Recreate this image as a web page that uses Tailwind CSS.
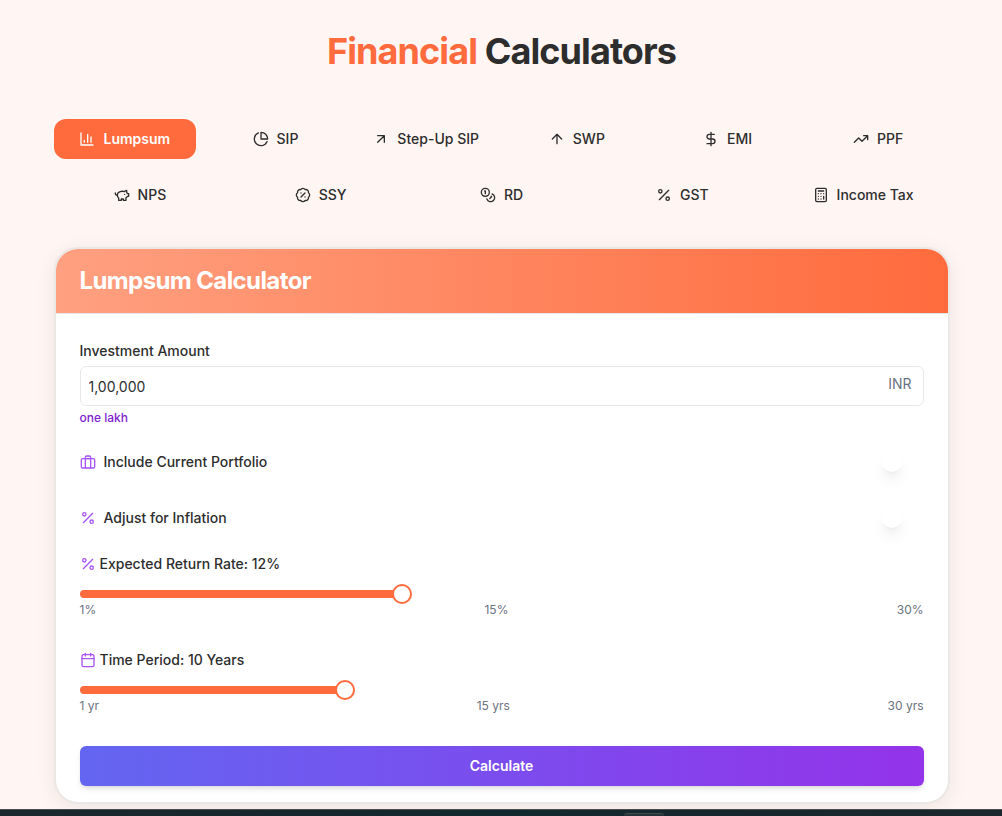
<!DOCTYPE html>
<html lang="en">
<head>
<meta charset="UTF-8" />
<meta name="viewport" content="width=device-width, initial-scale=1" />
<title>Financial Calculators</title>
<script src="https://cdn.jsdelivr.net/npm/@tailwindcss/browser@4"></script>
</head>
<body class="flex min-h-screen flex-col bg-[#fff5f2] font-['Inter',sans-serif] text-sm text-[#2d2d2d]">

<!-- Icon set -->
<svg class="hidden" aria-hidden="true">
  <symbol id="bar-chart" viewBox="0 0 24 24"><path d="M3 3v18h18M18 17V9M13 17V5M8 17v-3" /></symbol>
  <symbol id="pie-chart" viewBox="0 0 24 24"><path d="M21.21 15.89A10 10 0 1 1 8 2.83" /><path d="M22 12A10 10 0 0 0 12 2v10z" /></symbol>
  <symbol id="arrow-up-right" viewBox="0 0 24 24"><path d="M7 7h10v10M7 17 17 7" /></symbol>
  <symbol id="arrow-up" viewBox="0 0 24 24"><path d="m5 12 7-7 7 7M12 19V5" /></symbol>
  <symbol id="dollar" viewBox="0 0 24 24"><path d="M12 2v20M17 5H9.5a3.5 3.5 0 0 0 0 7h5a3.5 3.5 0 0 1 0 7H6" /></symbol>
  <symbol id="trending-up" viewBox="0 0 24 24"><path d="m22 7-8.5 8.5-5-5L2 17M16 7h6v6" /></symbol>
  <symbol id="piggy-bank" viewBox="0 0 24 24"><path d="M19 5c-1.5 0-2.8 1.4-3 2-3.5-1.5-11-.3-11 5 0 1.8 0 3 2 4.5V20h4v-2h3v2h4v-4c1-.5 1.7-1 2-2h2v-4h-2c0-1-.5-1.5-1-2V5z" /><path d="M2 9v1c0 1.1.9 2 2 2h1M16 11h.01" /></symbol>
  <symbol id="badge-percent" viewBox="0 0 24 24"><path d="M3.85 8.62a4 4 0 0 1 4.78-4.77 4 4 0 0 1 6.74 0 4 4 0 0 1 4.78 4.78 4 4 0 0 1 0 6.74 4 4 0 0 1-4.77 4.78 4 4 0 0 1-6.75 0 4 4 0 0 1-4.78-4.77 4 4 0 0 1 0-6.76Z" /><path d="m15 9-6 6M9 9h.01M15 15h.01" /></symbol>
  <symbol id="coins" viewBox="0 0 24 24"><circle cx="8" cy="8" r="6" /><path d="M18.09 10.37A6 6 0 1 1 10.34 18M7 6h1v4M16.71 13.88l.7.71-2.82 2.82" /></symbol>
  <symbol id="percent" viewBox="0 0 24 24"><path d="M19 5 5 19" /><circle cx="6.5" cy="6.5" r="2.5" /><circle cx="17.5" cy="17.5" r="2.5" /></symbol>
  <symbol id="calculator" viewBox="0 0 24 24"><rect x="4" y="2" width="16" height="20" rx="2" /><path d="M8 6h8M16 14v4M16 10h.01M12 10h.01M8 10h.01M12 14h.01M8 14h.01M12 18h.01M8 18h.01" /></symbol>
  <symbol id="briefcase" viewBox="0 0 24 24"><rect x="2" y="7" width="20" height="14" rx="2" /><path d="M16 21V5a2 2 0 0 0-2-2h-4a2 2 0 0 0-2 2v16M8 7h8" /></symbol>
  <symbol id="calendar" viewBox="0 0 24 24"><rect x="3" y="4" width="18" height="18" rx="2" /><path d="M16 2v4M8 2v4M3 10h18" /></symbol>
</svg>

<main class="mx-auto w-full max-w-[897px] pt-[31px] pl-px">
  <h1 class="text-center text-4xl font-bold tracking-tight"><span class="text-[#ff6b3d]">Financial</span> Calculators</h1>

  <!-- Calculator tabs -->
  <nav class="mt-12 flex flex-wrap gap-x-2 gap-y-4 font-medium [&_svg]:size-4 [&_svg]:fill-none [&_svg]:stroke-current [&_svg]:stroke-2 [&_svg]:[stroke-linecap:round] [&_svg]:[stroke-linejoin:round]">
    <button type="button" class="flex h-10 min-w-[130px] flex-1 items-center justify-center gap-2 rounded-xl bg-[#ff6b3d] font-semibold text-white"><svg><use href="#bar-chart" /></svg>Lumpsum</button>
    <button type="button" class="flex h-10 min-w-[130px] flex-1 items-center justify-center gap-2 rounded-xl"><svg><use href="#pie-chart" /></svg>SIP</button>
    <button type="button" class="flex h-10 min-w-[130px] flex-1 items-center justify-center gap-2 rounded-xl"><svg><use href="#arrow-up-right" /></svg>Step-Up SIP</button>
    <button type="button" class="flex h-10 min-w-[130px] flex-1 items-center justify-center gap-2 rounded-xl"><svg><use href="#arrow-up" /></svg>SWP</button>
    <button type="button" class="flex h-10 min-w-[130px] flex-1 items-center justify-center gap-2 rounded-xl"><svg><use href="#dollar" /></svg>EMI</button>
    <button type="button" class="flex h-10 min-w-[130px] flex-1 items-center justify-center gap-2 rounded-xl"><svg><use href="#trending-up" /></svg>PPF</button>
    <button type="button" class="flex h-10 min-w-[130px] flex-1 items-center justify-center gap-2 rounded-xl"><svg><use href="#piggy-bank" /></svg>NPS</button>
    <button type="button" class="flex h-10 min-w-[130px] flex-1 items-center justify-center gap-2 rounded-xl"><svg><use href="#badge-percent" /></svg>SSY</button>
    <button type="button" class="flex h-10 min-w-[130px] flex-1 items-center justify-center gap-2 rounded-xl"><svg><use href="#coins" /></svg>RD</button>
    <button type="button" class="flex h-10 min-w-[130px] flex-1 items-center justify-center gap-2 rounded-xl"><svg><use href="#percent" /></svg>GST</button>
    <button type="button" class="flex h-10 min-w-[130px] flex-1 items-center justify-center gap-2 rounded-xl"><svg><use href="#calculator" /></svg>Income Tax</button>
  </nav>

  <section class="mt-8 overflow-hidden rounded-3xl border-2 border-[#ebe7e5] bg-white shadow-[0_4px_20px_rgba(0,0,0,0.07)]">
    <div class="flex h-[65px] items-center border-b border-[#e5e7eb] bg-linear-to-r/srgb from-[#ffa080] to-[#ff6b3d] bg-origin-border px-6">
      <h2 class="text-2xl font-bold tracking-tight text-white">Lumpsum Calculator</h2>
    </div>

    <form id="lumpsumForm" class="px-6 pt-[27px] pb-4 font-medium [&_svg]:size-4 [&_svg]:fill-none [&_svg]:stroke-[#a855f7] [&_svg]:stroke-2 [&_svg]:[stroke-linecap:round] [&_svg]:[stroke-linejoin:round]">
      <label for="amount" class="block">Investment Amount</label>
      <div class="relative mt-[5px]">
        <input id="amount" type="text" value="1,00,000" class="block h-10 w-full rounded-md border border-[#e5e7eb] bg-white pr-12 pl-2 font-normal" />
        <span class="absolute top-2 right-3 font-normal text-[#6b7280]">INR</span>
      </div>
      <p class="mt-1 text-xs text-[#7e22ce]">one lakh</p>

      <label class="mt-6 flex h-6 items-center gap-2">
        <svg><use href="#briefcase" /></svg>
        <span class="flex-1">Include Current Portfolio</span>
        <input type="checkbox" class="flex h-6 w-11 appearance-none items-center rounded-full px-0.5 before:size-5 before:rounded-full before:bg-white before:shadow-lg checked:bg-[#ff6b3d] checked:before:ml-auto" />
      </label>

      <label class="mt-8 flex h-6 items-center gap-2">
        <svg><use href="#percent" /></svg>
        <span class="flex-1">Adjust for Inflation</span>
        <input type="checkbox" class="flex h-6 w-11 appearance-none items-center rounded-full px-0.5 before:size-5 before:rounded-full before:bg-white before:shadow-lg checked:bg-[#ff6b3d] checked:before:ml-auto" />
      </label>

      <label for="rate" class="mt-6 flex items-center gap-1">
        <svg><use href="#percent" /></svg>
        <span>Expected Return Rate: <span id="rateValue">12</span>%</span>
      </label>
      <input id="rate" type="range" min="1" max="30" value="12" style="background-size: 37.9% 100%" class="mt-4 block h-2 w-full appearance-none rounded-full bg-[linear-gradient(#ff6b3d,#ff6b3d)] bg-no-repeat [&::-webkit-slider-thumb]:size-5 [&::-webkit-slider-thumb]:appearance-none [&::-webkit-slider-thumb]:rounded-full [&::-webkit-slider-thumb]:border-2 [&::-webkit-slider-thumb]:border-[#ff6b3d] [&::-webkit-slider-thumb]:bg-white" />
      <div class="mt-1 flex justify-between text-xs font-normal text-[#6b7280]"><span>1%</span><span>15%</span><span>30%</span></div>

      <label for="years" class="mt-8 flex items-center gap-1">
        <svg><use href="#calendar" /></svg>
        <span>Time Period: <span id="yearsValue">10</span> Years</span>
      </label>
      <input id="years" type="range" min="1" max="30" value="10" style="background-size: 31% 100%" class="mt-4 block h-2 w-full appearance-none rounded-full bg-[linear-gradient(#ff6b3d,#ff6b3d)] bg-no-repeat [&::-webkit-slider-thumb]:size-5 [&::-webkit-slider-thumb]:appearance-none [&::-webkit-slider-thumb]:rounded-full [&::-webkit-slider-thumb]:border-2 [&::-webkit-slider-thumb]:border-[#ff6b3d] [&::-webkit-slider-thumb]:bg-white" />
      <div class="mt-1 flex justify-between text-xs font-normal text-[#6b7280]"><span>1 yr</span><span>15 yrs</span><span>30 yrs</span></div>

      <button type="submit" class="mt-8 block h-10 w-full rounded-md bg-linear-to-r/srgb from-[#6366f1] to-[#9333ea] font-semibold text-white shadow-md">Calculate</button>
    </form>
  </section>
</main>

<footer class="relative mt-[5px] flex flex-1 justify-center border-t border-[#4a4d4e] bg-linear-to-r/srgb from-[#1b272c] via-[#11292e] to-[#1b272c] pt-[3px]">
  <div class="ml-[286px] w-10 rounded-t-md border-t border-[#3f4b50] bg-[#26343a]"></div>
</footer>

<script>
  // Keep the filled part of each slider and its label in step with the value
  function bindSlider(id) {
    const slider = document.getElementById(id);
    const label = document.getElementById(id + 'Value');
    slider.addEventListener('input', () => {
      const filled = (slider.value - slider.min) / (slider.max - slider.min) * 100;
      slider.style.backgroundSize = filled + '% 100%';
      label.textContent = slider.value;
    });
  }

  bindSlider('rate');
  bindSlider('years');

  document.getElementById('lumpsumForm').addEventListener('submit', (e) => {
    e.preventDefault();
  });
</script>

</body>
</html>
